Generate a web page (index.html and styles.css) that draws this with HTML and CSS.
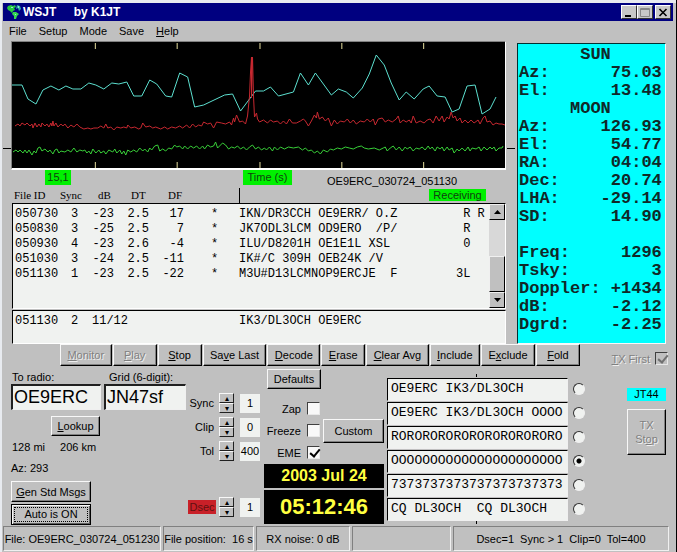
FILE: index.html
```
<!DOCTYPE html>
<html lang="en">
<head>
    <meta charset="UTF-8">
    <meta name="viewport" content="width=device-width, initial-scale=1.0">
    <title>WSJT by K1JT</title>
    <link rel="stylesheet" href="styles.css">
</head>
<body>
    <div class="window">
        <header class="title-bar">
            <svg class="app-icon" width="16" height="16" viewBox="0 0 16 16">
                <path fill="#27c93f" d="M1 2L4 1L6 2L8 1L9 3L7 4L8 6L6 7L5 9L3 7L1 6L0 4Z"/>
                <path fill="#35d850" d="M6 8L9 8L12 10L10 12L9 15L7 15L7 12L5 10Z"/>
                <path fill="#2fb8a0" d="M10 1L13 2L14 5L12 7L11 4L9 5Z"/>
                <path fill="#8fe8d8" d="M4 3h2v1h-2zM11 2h1v2h-1zM8 10h1v1h-1z"/>
            </svg>
            <h1>WSJT <span>by K1JT</span></h1>
            <div class="window-buttons">
                <button aria-label="Minimize"><svg width="10" height="9"><path fill="#000" d="M1 7h6v2h-6z"/></svg></button>
                <button aria-label="Maximize"><svg width="10" height="9"><path fill="none" stroke="#888" d="M.5 .5h9v8h-9zM1 1.5h8"/></svg></button>
                <button class="close" aria-label="Close"><svg width="10" height="9"><path fill="none" stroke="#000" stroke-width="1.6" d="M1.5 1L8.5 8M8.5 1L1.5 8"/></svg></button>
            </div>
        </header>

        <nav class="menu-bar">
            <button>File</button>
            <button>Setup</button>
            <button>Mode</button>
            <button>Save</button>
            <button><u>H</u>elp</button>
        </nav>

        <main>
            <div class="top">
                <div class="decode-area">
                    <div class="plot-row">
                        <span class="axis-mark"></span>
                        <svg class="plot" viewBox="12 42 494 126" preserveAspectRatio="none">
                            <path class="ticks" d="M95.5 43v6M177.5 43v6M260.5 43v6M342.5 43v6M424.5 43v6M95.5 162v6M177.5 162v6M260.5 162v6M342.5 162v6M424.5 162v6"/>
                            <polyline class="cyan" points="12,85 22,85 28,99 36,104 43,90 51,86 59,90 66,86 73,89 81,89 89,83 96,85 104,89 112,83 119,84 127,82 134,96 142,96 150,80 157,84 166,96 172,97 180,73 188,77 195,107 204,105 225,95 233,94 241,111 250,99 256,91 264,91 271,87 279,96 294,92 301,73 309,85 316,73 324,84 332,95 339,89 347,92 354,98 363,88 370,74 377,55 385,65 392,83 400,100 407,92 415,99 424,89 430,86 438,96 446,97 453,112 460,109 468,86 476,85 483,114 491,109 497,97"/>
                            <polyline class="red" points="15,126 18,124 20,126 22,123 25,125 27,123 30,126 32,124 33,128 35,123 37,127 39,124 41,127 42,123 45,126 47,124 49,127 51,123 52,126 53,121 54,126 56,123 58,127 61,124 63,126 65,124 68,128 71,125 74,127 77,124 80,127 84,129 88,128 91,129 94,128 98,128 101,126 104,128 106,124 108,128 111,127 114,130 117,127 121,128 124,127 127,128 128,125 131,128 135,127 139,129 141,128 143,123 146,127 150,126 153,128 156,127 161,129 165,127 168,129 172,127 176,128 180,126 183,128 187,125 190,128 193,124 196,127 199,125 202,126 204,122 208,124 211,123 214,128 217,122 222,123 226,124 230,122 232,125 234,118 235,122 237,115 240,122 243,121 246,124 248,116 250,96 251,72 252,57 252,98 253,57 254,96 255,117 257,113 258,119 260,122 264,120 268,123 271,120 274,122 278,121 281,124 284,121 287,124 290,119 293,123 297,123 301,121 304,119 306,121 309,126 312,121 315,115 317,118 318,112 320,119 323,117 326,121 329,118 332,126 335,120 338,124 341,121 345,122 348,119 351,123 354,120 357,124 361,121 365,122 368,119 371,122 374,119 376,125 379,119 383,118 386,122 389,120 393,122 397,119 399,116 401,123 404,120 407,122 410,120 412,123 414,116 417,123 421,121 425,123 428,120 431,119 434,123 437,116 440,121 443,116 445,122 448,117 450,119 452,112 454,118 456,116 458,121 461,118 463,123 466,120 469,123 472,120 475,123 479,120 481,124 484,118 486,116 488,122 491,121 494,125 497,123 500,124 503,124 506,125"/>
                            <polyline class="green" points="13,152 16,150 18,152 20,150 23,153 25,150 27,153 29,150 32,155 34,151 36,153 38,148 40,147 42,151 45,149 48,152 50,150 53,154 55,150 57,149 59,153 61,151 65,152 68,150 71,152 74,148 77,152 80,150 83,151 85,150 87,153 89,151 91,154 93,149 96,153 99,150 101,153 104,151 106,154 109,150 113,152 115,149 117,153 120,150 122,154 124,151 126,155 128,150 131,152 134,150 137,152 140,148 143,151 145,149 148,152 150,148 152,150 155,146 158,145 160,151 163,149 166,151 169,148 172,149 175,145 177,147 180,146 183,149 185,146 188,149 191,146 194,148 197,146 200,149 203,146 205,149 208,145 211,147 214,146 216,142 218,148 221,145 223,143 226,145 229,149 232,147 235,148 238,146 241,149 244,147 247,150 250,147 253,145 256,149 259,147 262,150 265,148 267,150 270,147 273,151 275,147 278,150 281,147 285,149 289,147 294,148 299,147 303,150 306,148 309,151 312,150 315,153 318,151 321,154 324,150 328,152 331,149 334,150 338,148 342,149 346,147 350,148 354,149 358,147 362,146 365,148 369,149 375,148 380,150 384,148 386,147 388,151 391,148 394,146 397,150 400,147 403,151 406,147 408,149 411,147 414,151 417,148 420,149 423,147 426,150 429,146 431,149 433,147 436,151 438,147 441,149 443,147 445,151 448,147 450,150 453,148 455,153 458,149 460,151 463,148 466,151 469,147 471,151 473,148 477,149 480,147 482,151 485,147 488,150 491,147 493,149 495,147 497,151 500,148 503,148 504,146"/>
                        </svg>
                        <span class="axis-mark"></span>
                    </div>

                    <div class="plot-labels">
                        <span class="tag tag-value">15,1</span>
                        <span class="tag tag-time">Time (s)</span>
                        <span class="current-file">OE9ERC_030724_051130</span>
                    </div>

                    <div class="column-heads">
                        <span class="h-file">File ID</span>
                        <span class="h-sync">Sync</span>
                        <span class="h-db">dB</span>
                        <span class="h-dt">DT</span>
                        <span class="h-df">DF</span>
                        <span class="h-cursor"></span>
                        <span class="tag tag-state">Receiving</span>
                    </div>

                    <div class="list-box decoded">
                        <table>
                            <colgroup><col class="c-file"><col class="c-sync"><col class="c-db"><col class="c-dt"><col class="c-df"><col class="c-star"><col><col class="c-flag"></colgroup>
                            <tbody>
                                <tr><td>050730</td><td>3</td><td>-23</td><td>2.5</td><td>17</td><td>*</td><td>IKN/DR3CCH OE9ERR/ O.Z</td><td> R R</td></tr>
                                <tr><td>050830</td><td>3</td><td>-25</td><td>2.5</td><td>7</td><td>*</td><td>JK7ODL3LCM OD9ERO  /P/</td><td> R</td></tr>
                                <tr><td>050930</td><td>4</td><td>-23</td><td>2.6</td><td>-4</td><td>*</td><td>ILU/D8201H OE1E1L XSL</td><td> 0</td></tr>
                                <tr><td>051030</td><td>3</td><td>-24</td><td>2.5</td><td>-11</td><td>*</td><td>IK#/C 309H OEB24K /V</td><td></td></tr>
                                <tr><td>051130</td><td>1</td><td>-23</td><td>2.5</td><td>-22</td><td>*</td><td>M3U#D13LCMNOP9ERCJE  F</td><td>3L</td></tr>
                            </tbody>
                        </table>
                        <div class="scrollbar">
                            <button aria-label="Scroll up"><svg width="7" height="4"><path d="M0 4L3.5 0L7 4Z"/></svg></button>
                            <div class="track"><div class="thumb"></div></div>
                            <button aria-label="Scroll down"><svg width="7" height="4"><path d="M0 0L3.5 4L7 0Z"/></svg></button>
                        </div>
                    </div>

                    <div class="list-box average">
                        <table>
                            <colgroup><col class="c-file"><col class="c-sync"><col class="c-count"><col></colgroup>
                            <tbody>
                                <tr><td>051130</td><td>2</td><td>11/12</td><td>IK3/DL3OCH OE9ERC</td></tr>
                            </tbody>
                        </table>
                    </div>
                </div>

                <pre class="astro">      SUN
Az:      75.03
El:      13.48
     MOON
Az:     126.93
El:      54.77
RA:      04:04
Dec:     20.74
LHA:    -29.14
SD:      14.90

Freq:     1296
Tsky:        3
Doppler: +1434
dB:      -2.12
Dgrd:    -2.25</pre>
            </div>

            <div class="toolbar">
                <div class="toolbar-buttons">
                    <button class="btn" disabled><u>M</u>onitor</button>
                    <button class="btn" disabled><u>P</u>lay</button>
                    <button class="btn"><u>S</u>top</button>
                    <button class="btn">Sa<u>v</u>e Last</button>
                    <button class="btn"><u>D</u>ecode</button>
                    <button class="btn"><u>E</u>rase</button>
                    <button class="btn"><u>C</u>lear Avg</button>
                    <button class="btn"><u>I</u>nclude</button>
                    <button class="btn">E<u>x</u>clude</button>
                    <button class="btn"><u>F</u>old</button>
                </div>
                <label class="check tx-first"><span><u>T</u>X First</span><input type="checkbox" checked disabled></label>
            </div>

            <div class="controls">
                <section class="station">
                    <div class="station-fields">
                        <div class="field">
                            <label for="to-radio">To radio:</label>
                            <input type="text" id="to-radio" value="OE9ERC">
                        </div>
                        <div class="field grid-field">
                            <label for="grid">Grid (6-digit):</label>
                            <input type="text" id="grid" value="JN47sf">
                        </div>
                    </div>
                    <button class="btn lookup"><u>L</u>ookup</button>
                    <p class="distance"><span>128 mi</span><span>206 km</span></p>
                    <p class="azimuth">Az: 293</p>
                    <button class="btn wide"><u>G</u>en Std Msgs</button>
                    <button class="btn wide auto"><span>Auto is ON</span></button>
                </section>

                <section class="spinners">
                    <div class="spin-row">
                        <label for="sync">Sync</label>
                        <span class="spin"><button aria-label="Sync up">▴</button><button aria-label="Sync down">▾</button></span>
                        <input type="text" id="sync" value="1">
                    </div>
                    <div class="spin-row">
                        <label for="clip">Clip</label>
                        <span class="spin"><button aria-label="Clip up">▴</button><button aria-label="Clip down">▾</button></span>
                        <input type="text" id="clip" value="0">
                    </div>
                    <div class="spin-row">
                        <label for="tol">Tol</label>
                        <span class="spin"><button aria-label="Tol up">▴</button><button aria-label="Tol down">▾</button></span>
                        <input type="text" id="tol" value="400">
                    </div>
                    <div class="spin-row dsec">
                        <label for="dsec">Dsec</label>
                        <span class="spin"><button aria-label="Dsec up">▴</button><button aria-label="Dsec down">▾</button></span>
                        <input type="text" id="dsec" value="1">
                    </div>
                </section>

                <section class="options">
                    <button class="btn defaults">Defaults</button>
                    <div class="option-row">
                        <div class="checks">
                            <label class="check"><span>Zap</span><input type="checkbox"></label>
                            <label class="check"><span>Freeze</span><input type="checkbox"></label>
                            <label class="check"><span>EME</span><input type="checkbox" checked></label>
                        </div>
                        <button class="btn custom">Custom</button>
                    </div>
                    <div class="clock">
                        <div class="date">2003 Jul 24</div>
                        <div class="time">05:12:46</div>
                    </div>
                </section>

                <section class="messages">
                    <span class="frame-mark"></span>
                    <div class="message"><input type="text" aria-label="Message 1" value="OE9ERC IK3/DL3OCH"><input type="radio" name="tx" aria-label="Send message 1"></div>
                    <div class="message"><input type="text" aria-label="Message 2" value="OE9ERC IK3/DL3OCH OOOO"><input type="radio" name="tx" aria-label="Send message 2"></div>
                    <div class="message"><input type="text" aria-label="Message 3" value="RORORORORORORORORORORO"><input type="radio" name="tx" aria-label="Send message 3"></div>
                    <div class="message"><input type="text" aria-label="Message 4" value="OOOOOOOOOOOOOOOOOOOOOO"><input type="radio" name="tx" aria-label="Send message 4" checked></div>
                    <div class="message"><input type="text" aria-label="Message 5" value="7373737373737373737373"><input type="radio" name="tx" aria-label="Send message 5"></div>
                    <div class="message"><input type="text" aria-label="Message 6" value="CQ DL3OCH  CQ DL3OCH"><input type="radio" name="tx" aria-label="Send message 6"></div>
                    <span class="frame-mark"></span>
                </section>

                <section class="tx">
                    <span class="mode">JT44</span>
                    <button class="btn tx-stop" disabled>TX<br>St<u>o</u>p</button>
                </section>
            </div>
        </main>

        <footer class="status-bar">
            <span class="s-file">File: OE9ERC_030724_051230</span>
            <span class="s-pos">File position:&nbsp; 16 s</span>
            <span class="s-noise">RX noise: 0 dB</span>
            <span class="s-empty"></span>
            <span class="s-params">Dsec=1&nbsp; Sync &gt; 1&nbsp; Clip=0&nbsp; Tol=400</span>
        </footer>
    </div>
</body>
</html>
```

FILE: styles.css
```
* {
    box-sizing: border-box;
}

body {
    margin: 0;
    background: #e8ebf0;
    font-family: "Liberation Sans", Arial, sans-serif;
    font-size: 11px;
    line-height: 14px;
    color: #000;
}

button,
input {
    font: inherit;
    color: inherit;
    margin: 0;
    padding: 0;
    border-radius: 0;
}

p {
    margin: 0;
}

.window {
    min-height: 100vh;
    padding: 3px 3px 0 1px;
    display: flex;
    flex-direction: column;
    background: #c0c0c0;
    border-left: 2px solid #e8ebf0;
    border-right: 1px solid #000;
    box-shadow: inset 0 3px #e8ebf0;
}

/* title bar */
.title-bar {
    display: flex;
    align-items: center;
    height: 18px;
    padding: 0 2px 0 4px;
    background: #000080;
    color: #fff;
}

h1 {
    flex: 1;
    margin: 0;
    font-size: 12px;
    line-height: 18px;
}

h1 span {
    margin-left: 14px;
}

.window-buttons {
    display: flex;
}

.window-buttons button {
    display: flex;
    justify-content: center;
    align-items: center;
    width: 16px;
    height: 14px;
    background: #c8c8c8;
    border: 1px solid;
    border-color: #fff #333 #333 #fff;
}

.window-buttons .close {
    margin-left: 2px;
}

.menu-bar {
    display: flex;
    gap: 12px;
    height: 20px;
    padding-left: 6px;
}

.menu-bar button {
    background: none;
    border: none;
}

/* plot and decoded text */
.top {
    display: flex;
}

.decode-area {
    flex: 1;
    min-width: 0;
}

.plot-row {
    display: flex;
    align-items: flex-end;
}

.axis-mark {
    width: 8px;
    height: 1px;
    margin-bottom: 21px;
    background: #000;
}

.axis-mark:last-child {
    margin-left: 1px;
}

.plot {
    flex: 1;
    min-width: 0;
    height: 129px;
    background: #000;
    border: 1px solid;
    border-color: #808080 #fff #fff #808080;
    border-bottom-width: 2px;
}

.plot polyline,
.ticks {
    fill: none;
    stroke-width: 1;
    shape-rendering: crispEdges;
}

.ticks {
    stroke: #e8e0a0;
}

.cyan {
    stroke: #5ce0d0;
}

.red {
    stroke: #c82830;
}

.green {
    stroke: #38d038;
}

.tag {
    background: #00f000;
    color: #104010;
    text-align: center;
}

.plot-labels {
    display: flex;
    align-items: flex-start;
    padding-left: 42px;
    height: 17px;
}

.tag-value {
    width: 26px;
    line-height: 15px;
}

.tag-time {
    width: 49px;
    margin-left: 172px;
    line-height: 15px;
}

.current-file {
    margin-left: 35px;
    padding-top: 4px;
}

.column-heads {
    display: flex;
    align-items: center;
    padding: 0 29px 0 11px;
    height: 16px;
    font-family: "Liberation Serif", "Times New Roman", serif;
}

.h-file {
    width: 46px;
}

.h-sync {
    width: 38px;
}

.h-db {
    width: 33px;
}

.h-dt {
    width: 37px;
}

.h-df {
    width: 71px;
}

.h-cursor {
    width: 1px;
    height: 15px;
    background: #000;
}

.tag-state {
    width: 57px;
    margin-left: auto;
    line-height: 12px;
    font-family: "Liberation Sans", Arial, sans-serif;
}

.list-box {
    display: flex;
    margin: 0 9px;
    background: #f0f2f0;
    border: 1px solid;
    border-color: #000 #fff #fff #000;
    font-family: "Liberation Mono", "Courier New", monospace;
    font-size: 12px;
}

.decoded {
    height: 106px;
}

.average {
    height: 34px;
    margin-top: 1px;
}

.list-box table {
    flex: 1;
    min-width: 0;
    align-self: flex-start;
    table-layout: fixed;
    border-collapse: collapse;
    margin: 3px 0 0 2px;
}

.list-box td {
    padding: 0;
    height: 15px;
    line-height: 15px;
    white-space: pre;
}

.decoded td:nth-child(3),
.decoded td:nth-child(4),
.decoded td:nth-child(5) {
    text-align: right;
}

.decoded td:nth-child(6) {
    padding-left: 27px;
}

.c-file {
    width: 56px;
}

.c-sync {
    width: 14px;
}

.c-db {
    width: 29px;
}

.c-dt {
    width: 35px;
}

.c-df {
    width: 35px;
}

.c-star {
    width: 55px;
}

.c-flag {
    width: 33px;
}

.c-count {
    width: 154px;
}

.average td:nth-child(3) {
    padding-left: 7px;
}

.scrollbar {
    display: flex;
    flex-direction: column;
    width: 16px;
}

.scrollbar button {
    display: flex;
    justify-content: center;
    align-items: center;
    height: 16px;
}

.scrollbar button,
.thumb {
    background: #c0c0c0;
    border: 1px solid;
    border-color: #f0f0f0 #000 #000 #f0f0f0;
}

.track {
    flex: 1;
    display: flex;
    flex-direction: column;
    justify-content: flex-end;
    background: #d8d8d8;
}

.thumb {
    height: 50%;
}

.astro {
    width: 149px;
    margin: 2px 7px 0 2px;
    padding: 2px 0 8px 1px;
    background: #00ffff;
    border: 1px solid;
    border-color: #003030 #f8f8f8 #f8f8f8 #003030;
    font-family: "Liberation Mono", "Courier New", monospace;
    font-size: 17px;
    font-weight: bold;
    line-height: 18px;
    color: #102828;
}

/* buttons */
.btn {
    background: #c0c0c0;
    border: 1px solid;
    border-color: #f8f8f8 #000 #000 #f8f8f8;
    box-shadow: inset -1px -1px #808080;
    height: 20px;
}

.btn:disabled {
    color: #808080;
    text-shadow: 1px 1px #f0f0f0;
}

.toolbar {
    display: flex;
    justify-content: space-between;
    padding: 0 5px 0 57px;
}

.toolbar-buttons {
    flex: 1;
    display: flex;
    gap: 1px;
}

.toolbar-buttons .btn {
    flex: 1 1 auto;
    min-width: 44px;
    height: 22px;
}

.check {
    display: flex;
    justify-content: flex-end;
    align-items: center;
    gap: 6px;
    height: 13px;
}

.check input {
    appearance: none;
    width: 13px;
    height: 13px;
    background: #f8f8f8;
    border: 1px solid;
    border-color: #404040 #e8e8e8 #e8e8e8 #404040;
}

.check input:checked::after {
    content: "";
    display: block;
    width: 4px;
    height: 8px;
    margin: 0 0 0 4px;
    border: solid #000;
    border-width: 0 2px 2px 0;
    transform: rotate(40deg);
}

.tx-first {
    width: 88px;
    margin-top: 8px;
    gap: 5px;
    color: #808080;
    text-shadow: 1px 1px #f0f0f0;
}

.check input:disabled {
    background: #c0c0c0;
}

.check input:disabled::after {
    border-color: #707070;
}

/* lower controls */
.controls {
    display: flex;
    align-items: flex-start;
    padding-left: 8px;
}

.station {
    width: 177px;
    padding-top: 4px;
    display: flex;
    flex-direction: column;
    align-items: flex-start;
}

.station-fields {
    display: flex;
    gap: 3px;
}

.field {
    display: flex;
    flex-direction: column;
    width: 90px;
}

.grid-field {
    width: 82px;
}

.field label {
    padding-left: 1px;
}

.grid-field label {
    padding-left: 5px;
}

.field input {
    width: 100%;
    height: 26px;
    padding: 0 1px;
    background: #f0f2f0;
    border: 2px solid;
    border-color: #202020 #f0f0f0 #f0f0f0 #202020;
    border-width: 2px 1px 1px 2px;
    font-size: 18px;
}

.lookup {
    width: 49px;
    margin: 6px 0 0 40px;
}

.distance {
    display: flex;
    gap: 15px;
    margin: 4px 0 7px 1px;
}

.azimuth {
    margin: 0 0 6px 0;
}

.wide {
    width: 80px;
    height: 21px;
    margin-bottom: 2px;
}

.auto {
    margin-bottom: 0;
    padding: 1px;
    border-color: #000;
    box-shadow: inset 1px 1px #f8f8f8, inset -1px -1px #606060;
}

.auto span {
    display: block;
    margin: 0 1px;
    border: 1px dotted #000;
    line-height: 13px;
}

.spinners {
    display: flex;
    flex-direction: column;
    gap: 4px;
    width: 76px;
    padding-top: 27px;
}

.spin-row {
    display: flex;
    align-items: center;
    height: 20px;
}

.spin-row label {
    flex: 1;
    text-align: right;
    margin-right: 5px;
}

.spin {
    display: flex;
    flex-direction: column;
    width: 15px;
    margin-right: 6px;
}

.spin button {
    height: 10px;
    background: #c0c0c0;
    border: 1px solid;
    border-color: #f8f8f8 #202020 #202020 #f8f8f8;
    font-size: 8px;
    line-height: 7px;
}

.spin-row input {
    width: 20px;
    height: 19px;
    margin-right: 4px;
    background: #f0f2f0;
    border: none;
    text-align: center;
}

.spin-row.dsec {
    margin-top: 32px;
}

.dsec label {
    flex: none;
    width: 28px;
    margin: 0 3px 0 0;
    background: #c82028;
    color: #601010;
    text-align: center;
}

.options {
    width: 120px;
    margin-right: 3px;
    padding-top: 3px;
}

.defaults {
    width: 54px;
    margin-left: 3px;
}

.option-row {
    display: flex;
    align-items: center;
    gap: 3px;
    padding: 13px 0 5px;
}

.checks {
    display: flex;
    flex-direction: column;
    gap: 9px;
    width: 56px;
}

.custom {
    flex: 1;
    height: 24px;
}

.clock {
    display: flex;
    flex-direction: column;
    gap: 2px;
    text-align: center;
    font-weight: bold;
    color: #ffff40;
}

.clock div {
    background: #000;
}

.date {
    font-size: 16px;
    line-height: 24px;
}

.time {
    font-size: 22px;
    line-height: 34px;
}

.messages {
    flex: 1;
    min-width: 0;
    padding-top: 8px;
}

.frame-mark {
    display: block;
    width: 1px;
    height: 3px;
    margin-left: 45%;
    background: #000;
}

.message {
    display: flex;
    align-items: center;
    gap: 5px;
    height: 24px;
}

.message input[type="text"] {
    flex: 1;
    min-width: 0;
    height: 23px;
    padding: 0 0 2px 3px;
    background: #f0f2f0;
    border: 1px solid;
    border-color: #000 #f0f0f0 #f0f0f0 #000;
    font-family: "Liberation Mono", "Courier New", monospace;
    font-size: 13px;
}

.message input[type="radio"] {
    appearance: none;
    width: 12px;
    height: 12px;
    border: 1px solid;
    border-color: #303030 #f0f0f0 #f0f0f0 #303030;
    border-radius: 50%;
    background: #f0f2f0;
}

.message input[type="radio"]:checked {
    background: radial-gradient(circle, #000 2px, #f0f2f0 3px);
}

.tx {
    display: flex;
    flex-direction: column;
    gap: 8px;
    width: 39px;
    margin: 22px 7px 0 42px;
}

.mode {
    background: #00ffff;
    text-align: center;
    line-height: 13px;
}

.tx-stop {
    height: 46px;
}

/* status bar */
.status-bar {
    display: flex;
    gap: 2px;
    margin-top: auto;
    padding: 0 4px 1px 0;
}

.status-bar span {
    height: 25px;
    border: 1px solid;
    border-color: #808080 #f0f0f0 #f0f0f0 #808080;
    line-height: 24px;
    text-align: center;
    white-space: nowrap;
}

.s-file {
    width: 158px;
}

.s-pos {
    width: 91px;
}

.s-noise {
    width: 94px;
}

.s-empty {
    width: 99px;
}

.s-params {
    flex: 1;
}
```
